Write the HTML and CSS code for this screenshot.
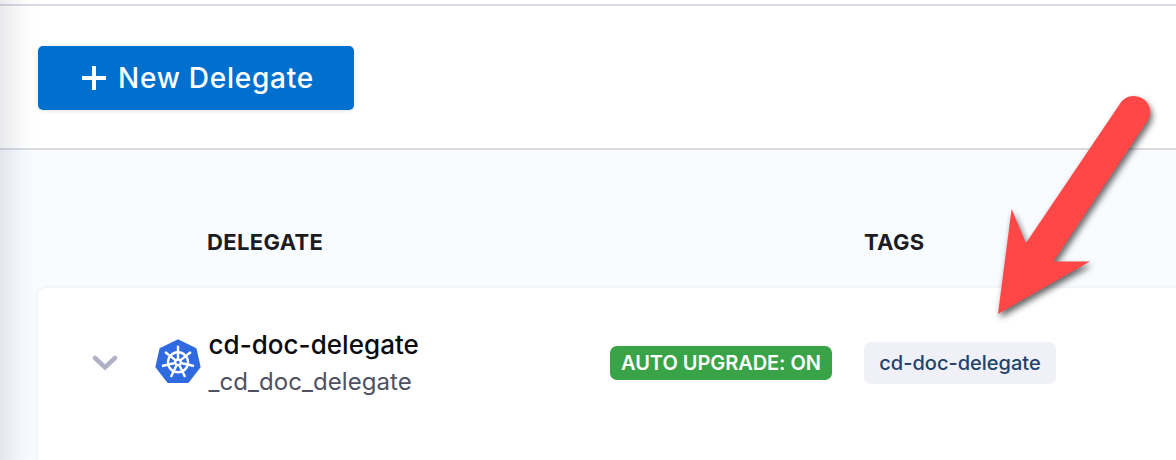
FILE: index.html
```html
<!DOCTYPE html>
<html lang="en">
<head>
<meta charset="utf-8">
<title>Delegates</title>
<link rel="stylesheet" href="styles.css">
</head>
<body>
<div class="page">
  <header class="toolbar">
    <button class="new-button">
      <svg class="plus" viewBox="0 0 24 24"><path d="M12 0v24M0 12h24"/></svg>
      <span>New Delegate</span>
    </button>
  </header>
  <main class="content">
    <div class="columns heading">
      <span class="col-name">DELEGATE</span>
      <span class="col-tags">TAGS</span>
    </div>
    <section class="columns card">
      <svg class="chevron" viewBox="0 0 26 16"><path d="M3 3l10 9.500L23 3"/></svg>
      <svg class="kube" viewBox="0 0 48 46">
        <path class="kube-body" d="M24 1.500L41.500 9.800L45.600 28L34 43H14L2.400 28L6.500 9.800Z"/>
        <g class="wheel" transform="translate(24 23.300)">
          <circle r="10"/>
          <path d="M0-16.500V-3M12.900-10.300L2.300-1.900M16 3.700L2.900.7M7.100 14.800L1.300 2.700M-7.100 14.800L-1.300 2.700M-16 3.700L-2.900.7M-12.900-10.300L-2.300-1.900"/>
          <circle class="hub" r="2.800"/>
        </g>
      </svg>
      <div class="names">
        <div class="title">cd-doc-delegate</div>
        <div class="subtitle">_cd_doc_delegate</div>
      </div>
      <span class="badge"><span>AUTO UPGRADE: ON</span></span>
      <span class="tag"><span>cd-doc-delegate</span></span>
    </section>
  </main>
  <div class="edge-shadow"></div>
  <svg class="arrow" viewBox="0 0 196 250">
    <path d="M18 234L31.600 129L46 163L140.300 23.300A16.200 16.200 0 0 1 167.500 41L73.500 181.500H110Z"/>
  </svg>
</div>
</body>
</html>
```

FILE: styles.css
```css
body {
  margin: 0;
  font-family: Inter, "Liberation Sans", sans-serif;
}

.page {
  position: relative;
  display: flex;
  flex-direction: column;
  width: 1176px;
  height: 460px;
  overflow: hidden;
  background: #fff;
}

.toolbar {
  box-sizing: border-box;
  height: 146px;
  margin-top: 4px;
  padding: 40px 38px;
  border-top: 2px solid #d9dae6;
  border-bottom: 2px solid #d9dae6;
}

.new-button {
  display: flex;
  align-items: center;
  gap: 12px;
  width: 316px;
  height: 64px;
  padding: 0 0 0 44px;
  border: 0;
  border-radius: 5px;
  background: #0070cf;
  box-shadow: 0 1px 4px rgba(40, 41, 61, .13);
  color: #fff;
  font: 500 28px/34px Inter, sans-serif;
  letter-spacing: .75px;
  white-space: nowrap;
}

.plus {
  width: 24px;
  height: 24px;
  fill: none;
  stroke: #fff;
  stroke-width: 4;
}

.content {
  flex: 1;
  padding-left: 38px;
  background: #f8fcff;
}

.columns {
  display: grid;
  grid-template-columns: 55px 62px 54px 401px 254px 1fr;
}

.heading {
  height: 138px;
  color: #1c1c22;
  font-size: 22px;
  font-weight: 650;
  letter-spacing: .35px;
  line-height: 28px;
}

.heading span {
  justify-self: start;
  padding-top: 78px;
}

.col-name {
  grid-column: 4;
  margin-left: -2px;
}

.col-tags {
  grid-column: 6;
}

.card {
  height: 190px;
  box-sizing: border-box;
  align-items: start;
  padding-top: 38px;
  border-radius: 8px 0 0 0;
  background: #fff;
  box-shadow: 0 0 4px rgba(40, 41, 61, .09);
}

.chevron {
  grid-column: 2;
  width: 26px;
  height: 16px;
  margin: 29px 0 0 -1px;
  fill: none;
  stroke: #b0b1c4;
  stroke-width: 4.500;
  stroke-linecap: round;
}

.kube {
  width: 48px;
  height: 46px;
  margin: 13px 0 0 -1px;
}

.kube-body {
  fill: #2f6ae0;
  stroke: #2f6ae0;
  stroke-width: 2;
  stroke-linejoin: round;
}

.wheel {
  fill: none;
  stroke: #fff;
  stroke-width: 2.400;
}

.wheel .hub {
  fill: #2f6ae0;
}

.names {
  white-space: nowrap;
}

.title {
  margin-left: -.5px;
  color: #0b0b0d;
  font-size: 26px;
  font-weight: 500;
  letter-spacing: .04px;
  line-height: 38px;
}

.subtitle {
  margin-left: -.5px;
  color: #4f5162;
  font-size: 24px;
  letter-spacing: .06px;
  line-height: 36px;
}

.badge {
  display: flex;
  align-items: center;
  justify-content: center;
  width: 222px;
  height: 34px;
  margin-top: 20px;
  border-radius: 7px;
  background: #38a347;
  color: #fff;
  font-size: 20px;
  font-weight: 600;
  letter-spacing: -.05px;
  white-space: nowrap;
}

.tag {
  display: flex;
  align-items: center;
  justify-content: center;
  width: 192px;
  height: 42px;
  margin-top: 16px;
  border-radius: 7px;
  background: #f0f0f8;
  color: #22426b;
  font-size: 20px;
  font-weight: 500;
  white-space: nowrap;
}

.edge-shadow {
  position: absolute;
  inset: 0 auto 0 0;
  width: 36px;
  background: linear-gradient(90deg, rgba(40, 41, 61, .1), rgba(40, 41, 61, .055) 35%, rgba(96, 97, 160, .02) 70%, transparent);
}

.arrow {
  position: absolute;
  left: 980px;
  top: 80px;
  width: 196px;
  height: 250px;
  fill: #ff4747;
  filter: drop-shadow(2px 4px 3px rgba(0, 0, 0, .6));
}
```
